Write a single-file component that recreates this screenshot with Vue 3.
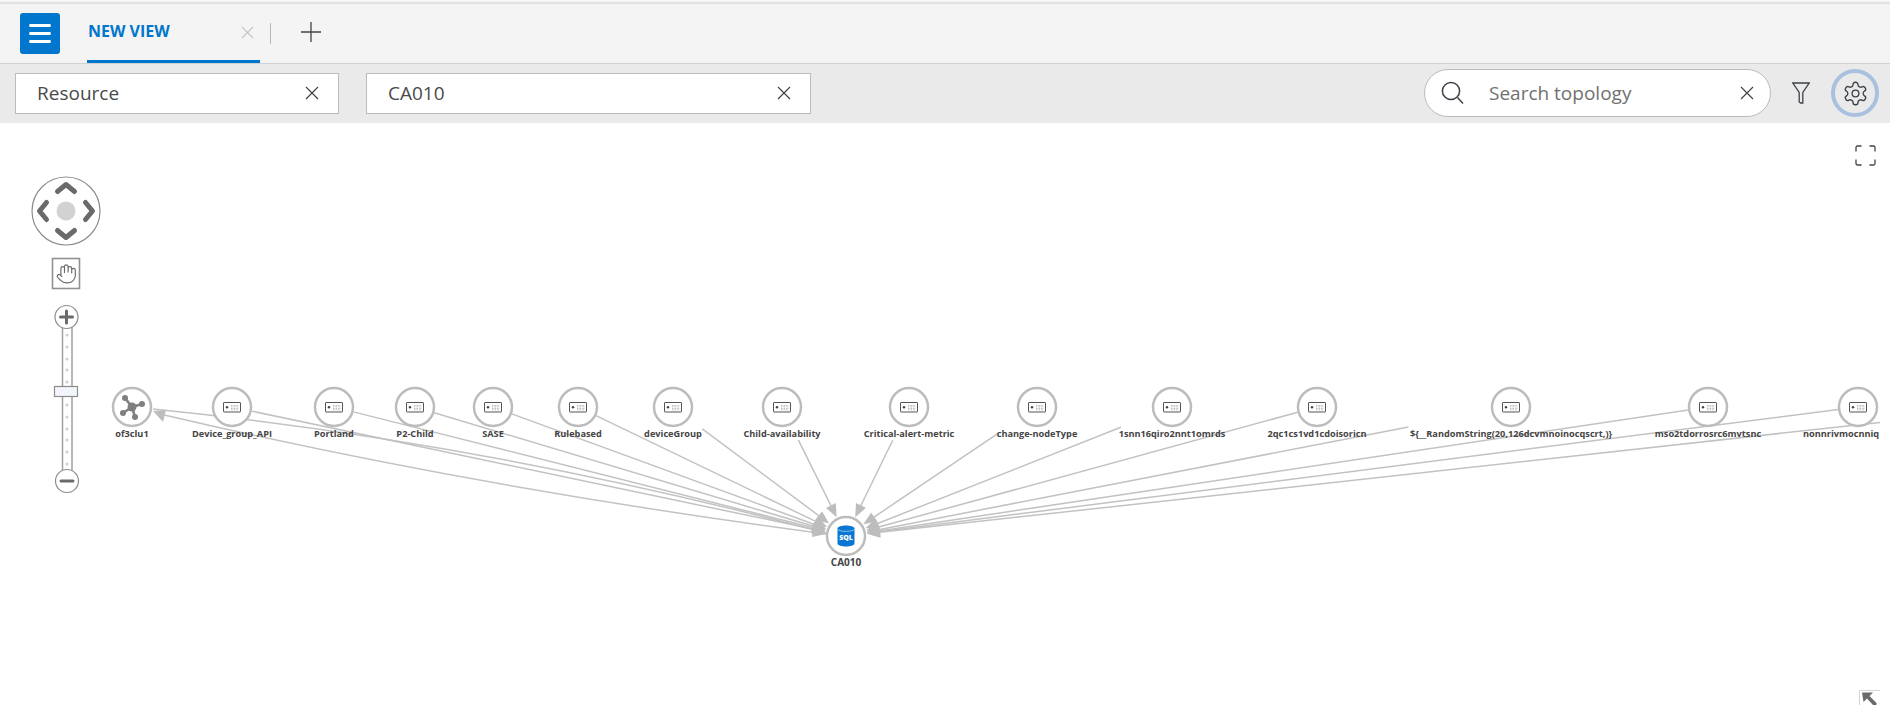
<script setup>
const target = { x: 846, y: 536, r: 20 }
const rawNodes = [
  { name: 'Device_group_API', x: 232 },
  { name: 'Portland', x: 334 },
  { name: 'P2-Child', x: 415 },
  { name: 'SASE', x: 493 },
  { name: 'Rulebased', x: 578 },
  { name: 'deviceGroup', x: 673 },
  { name: 'Child-availability', x: 782 },
  { name: 'Critical-alert-metric', x: 909 },
  { name: 'change-nodeType', x: 1037 },
  { name: '1snn16qiro2nnt1omrds', x: 1172 },
  { name: '2qc1cs1vd1cdoisoricn', x: 1317 },
  { name: '${__RandomString(20,126dcvmnoinocqscrt,)}', x: 1511 },
  { name: 'mso2tdorrosrc6mvtsnc', x: 1708 },
  { name: 'nonnrivmocnniq', x: 1858, labelX: -55, start: true },
]
const labelWidth = (s) => s.length * 4.9
const nodeY = 407

function edgeFrom(n) {
  const dx = target.x - n.x
  const dy = target.y - nodeY
  const len = Math.hypot(dx, dy)
  const ux = dx / len
  const uy = dy / len
  let t = 20
  const hw = labelWidth(n.name) / 2 + 2
  for (let s = 20; s < 140; s += 0.5) {
    const px = n.x + ux * s
    const py = nodeY + uy * s
    if (py > 426 && py < 440 && Math.abs(px - n.x) < hw) t = s + 0.5
  }
  const x1 = n.x + ux * t
  const y1 = nodeY + uy * t
  const x2 = target.x - ux * (target.r + 12)
  const y2 = target.y - uy * (target.r + 12)
  return { x1, y1, x2, y2, arrow: arrowAt(target.x - ux * (target.r + 1), target.y - uy * (target.r + 1), ux, uy) }
}
function arrowAt(tx, ty, ux, uy) {
  const bx = tx - ux * 13
  const by = ty - uy * 13
  const nx = -uy * 5.5
  const ny = ux * 5.5
  return `${tx},${ty} ${bx + nx},${by + ny} ${bx - nx},${by - ny}`
}
const nodes = rawNodes.map((n) => ({ ...n, edge: edgeFrom(n) }))
const offEdge = edgeFrom({ name: '', x: 2020 })
const hatch = [0, 1, 2, 3].flatMap((r) => [0, 1, 2, 3, 4].map((c) => ({ x: 8 + c * 1.6, y: 3 + r * 1.5 })))
const dots = [335, 347, 359, 370, 382, 405, 417, 429, 440, 452, 464]
</script>

<template>
  <div class="page">
    <div class="top-shadow"></div>
    <header class="tabbar">
      <button class="menu" aria-label="Menu"><span></span><span></span><span></span></button>
      <div class="tab">
        <span class="tab-title">NEW VIEW</span>
        <svg class="tab-x" width="13" height="13" viewBox="0 0 13 13"><path d="M1 1l11 11M12 1L1 12" /></svg>
      </div>
      <i class="divider"></i>
      <svg class="plus" width="22" height="22" viewBox="0 0 22 22"><path d="M11 1v20M1 11h20" /></svg>
    </header>
    <section class="filters">
      <div class="field first"><span>Resource</span>
        <svg class="x" width="14" height="14" viewBox="0 0 14 14"><path d="M1 1l12 12M13 1L1 13" /></svg>
      </div>
      <div class="field second"><span>CA010</span>
        <svg class="x" width="14" height="14" viewBox="0 0 14 14"><path d="M1 1l12 12M13 1L1 13" /></svg>
      </div>
      <div class="search">
        <svg class="search-ico" width="23" height="24" viewBox="0 0 23 24"><circle cx="10" cy="10" r="8.6" /><path d="M16.5 16.5l5.5 6" /></svg>
        <span class="placeholder">Search topology</span>
        <svg class="x" width="14" height="14" viewBox="0 0 14 14"><path d="M1 1l12 12M13 1L1 13" /></svg>
      </div>
      <svg class="funnel" width="18" height="22" viewBox="0 0 18 22"><path d="M.8 1h16.4l-6.400 9.500V21H8.600L7.200 20V10.500z" /></svg>
      <div class="gear-ring">
        <svg width="27" height="27" viewBox="0 0 24 24"><path d="M12.22 2h-.44a2 2 0 0 0-2 2v.18a2 2 0 0 1-1 1.73l-.43.25a2 2 0 0 1-2 0l-.15-.08a2 2 0 0 0-2.73.73l-.22.38a2 2 0 0 0 .73 2.73l.15.1a2 2 0 0 1 1 1.72v.51a2 2 0 0 1-1 1.74l-.15.09a2 2 0 0 0-.73 2.73l.22.38a2 2 0 0 0 2.73.73l.15-.08a2 2 0 0 1 2 0l.43.25a2 2 0 0 1 1 1.73V20a2 2 0 0 0 2 2h.44a2 2 0 0 0 2-2v-.18a2 2 0 0 1 1-1.73l.43-.25a2 2 0 0 1 2 0l.15.08a2 2 0 0 0 2.73-.73l.22-.39a2 2 0 0 0-.73-2.73l-.15-.08a2 2 0 0 1-1-1.74v-.5a2 2 0 0 1 1-1.74l.15-.09a2 2 0 0 0 .73-2.73l-.22-.38a2 2 0 0 0-2.73-.73l-.15.08a2 2 0 0 1-2 0l-.43-.25a2 2 0 0 1-1-1.73V4a2 2 0 0 0-2-2z" /><circle cx="12" cy="12" r="3" /></svg>
      </div>
    </section>
    <main class="canvas">
      <svg class="graph" width="1880" height="582" viewBox="0 123 1880 582">
        <g class="edges">
          <path d="M153 409 Q 490 443 826 533" />
          <path d="M160 414 Q 470 487 826 534" />
          <line v-for="n in nodes" :key="n.name" :x1="n.edge.x1" :y1="n.edge.y1" :x2="n.edge.x2" :y2="n.edge.y2" />
          <line :x1="offEdge.x1" :y1="offEdge.y1" :x2="offEdge.x2" :y2="offEdge.y2" />
        </g>
        <g class="arrows">
          <polygon points="153,411 166,410 163,422" />
          <polygon points="826,533 813,523 811,533" />
          <polygon points="826,534 813,527 812,537" />
          <polygon v-for="n in nodes" :key="n.name" :points="n.edge.arrow" />
          <polygon :points="offEdge.arrow" />
        </g>
        <g transform="translate(132 407)">
          <circle class="node" r="19" />
          <g class="cluster">
            <path d="M0 0L-7-9M0 0L10-3M0 0L3 10M0 0L-9 6" />
            <circle r="4.5" />
            <circle cx="-7" cy="-9" r="3" />
            <circle cx="10" cy="-3" r="3" />
            <circle cx="3" cy="10" r="3" />
            <circle cx="-9" cy="6" r="3" />
          </g>
          <text class="label" y="30">of3clu1</text>
        </g>
        <g v-for="n in nodes" :key="n.name" :transform="`translate(${n.x} ${nodeY})`">
          <circle class="node" r="19" />
          <g transform="translate(-9 -5)">
            <rect class="dev" x="0.5" y="0.5" width="17" height="9.5" rx="0.5" />
            <circle class="dev-dot" cx="4" cy="5.2" r="1.2" />
            <rect v-for="(h, i) in hatch" :key="i" class="dev-h" :x="h.x" :y="h.y" width="0.8" height="0.8" />
          </g>
          <text class="label" :class="{ 'label-start': n.start }" :x="n.labelX || 0" y="30">{{ n.name }}</text>
        </g>
        <g :transform="`translate(${target.x} ${target.y})`">
          <circle class="node" r="19" />
          <path class="db" d="M-8.5-7.5C-8.5-11.5 8.5-11.5 8.5-7.5V7.5C8.5 11.5-8.5 11.5-8.5 7.5z" />
          <path class="db-line" d="M-8.5-7.2C-8.5-3.8 8.5-3.8 8.5-7.2" />
          <text class="sql" y="3.6">SQL</text>
          <text class="label target-label" y="29.5">CA010</text>
        </g>
        <g transform="translate(66 211)">
          <circle class="nav-ring" r="34" />
          <circle class="nav-center" r="9.5" />
          <path class="chev" d="M-8.500-19.500L0-26.500L8.500-19.500M-8.500 19.500L0 26.500L8.500 19.500M-19.500-8.500L-26.500 0L-19.500 8.500M19.500-8.500L26.500 0L19.500 8.500" />
        </g>
        <g>
          <rect class="hand-box" x="52.5" y="258.5" width="27" height="30" />
          <g class="hand" transform="translate(55.5 263) scale(.9)">
            <path d="M18 11V6a2 2 0 0 0-2-2a2 2 0 0 0-2 2M14 10V4a2 2 0 0 0-2-2a2 2 0 0 0-2 2v2M10 10.500V6a2 2 0 0 0-2-2a2 2 0 0 0-2 2v8M18 8a2 2 0 1 1 4 0v6a8 8 0 0 1-8 8h-2c-2.800 0-4.500-.86-5.990-2.340l-3.600-3.600a2 2 0 0 1 2.830-2.820L7 15" />
          </g>
        </g>
        <g>
          <rect class="track" x="62.5" y="326" width="9.5" height="146" />
          <circle v-for="d in dots" :key="d" class="track-dot" cx="67" :cy="d" r="1.5" />
          <rect class="thumb" x="54.5" y="386.5" width="23" height="10" />
          <g transform="translate(66.5 317)">
            <circle class="zoom-btn" r="11.5" />
            <path class="zoom-sign" d="M-6 0H6M0-6V6" />
          </g>
          <g transform="translate(67 481)">
            <circle class="zoom-btn" r="11.5" />
            <path class="zoom-sign" d="M-6 0H6" />
          </g>
        </g>
      </svg>
      <svg class="fullscreen" width="21" height="21" viewBox="0 0 21 21"><path d="M1 6.500V2.500A1.500 1.500 0 0 1 2.500 1H6.500M14.500 1H18.500A1.500 1.500 0 0 1 20 2.500V6.500M20 14.500V18.500A1.500 1.500 0 0 1 18.500 20H14.500M6.500 20H2.500A1.500 1.500 0 0 1 1 18.500V14.500" /></svg>
      <svg class="corner" width="21" height="15" viewBox="0 0 21 15"><path class="corner-box" d="M.5 15V.5H21" /><path class="corner-arrow" d="M3 2.500h11l-3.500 3.500 7 7v2h-3.500l-6-6.500-3.500 3.500z" /></svg>
    </main>
  </div>
</template>

<style>
html, body { margin: 0; background: #fff; }
</style>

<style scoped>
.page {
  width: 1890px;
  height: 705px;
  overflow: hidden;
  display: flex;
  flex-direction: column;
  font-family: "Open Sans", "Noto Sans", sans-serif;
  color: #4a4a4a;
  background: #fff;
}
.top-shadow { height: 4px; background: linear-gradient(#fff, #d8d8d8); }
.tabbar {
  height: 59px;
  display: flex;
  align-items: flex-start;
  padding-left: 20px;
  background: #f4f4f4;
  border-bottom: 1px solid #d2d2d2;
}
.menu {
  width: 40px;
  height: 41px;
  margin-top: 9px;
  padding: 0 9px;
  border: 0;
  border-radius: 3px;
  background: #0077cc;
  display: flex;
  flex-direction: column;
  justify-content: center;
  gap: 5px;
}
.menu span { display: block; height: 3px; border-radius: 2px; background: #fff; }
.tab {
  width: 172px;
  height: 56px;
  margin-left: 27px;
  padding-left: 1px;
  display: flex;
  align-items: center;
  border-bottom: 3px solid #0077cc;
  justify-content: space-between;
}
.tab-title { font-size: 16px; font-weight: 700; color: #0077cc; margin-top: -2px; }
.tab-x { margin: 0 5px 0 0; position: relative; left: -1px; }
.tab-x path { stroke: #c8c8c8; stroke-width: 1.3; fill: none; }
.divider { width: 1px; height: 21px; margin: 19px 0 0 10px; background: #b8b8b8; }
.plus { margin: 17px 0 0 29px; }
.plus path { stroke: #444; stroke-width: 1.3; fill: none; }
.filters {
  height: 59px;
  box-sizing: border-box;
  display: flex;
  align-items: center;
  padding: 0 0 1px 15px;
  background: #eaeaea;
}
.field {
  height: 41px;
  box-sizing: border-box;
  display: flex;
  align-items: center;
  justify-content: space-between;
  padding: 0 19px 0 21px;
  background: #fff;
  border: 1px solid #bcbcbc;
  font-size: 19px;
}
.first { width: 324px; }
.second { width: 445px; margin-left: 27px; }
.x path { stroke: #444; stroke-width: 1.2; fill: none; }
.search {
  width: 347px;
  height: 48px;
  box-sizing: border-box;
  display: flex;
  align-items: center;
  padding: 0 16px;
  background: #fff;
  border: 1px solid #bcbcbc;
  border-radius: 24px;
  margin-left: 613px;
}
.search-ico { flex: none; }
.search-ico circle, .search-ico path { fill: none; stroke: #3c4248; stroke-width: 1.5; }
.placeholder { font-size: 19px; color: #707070; margin-left: 25px; flex: 1; }
.funnel { margin-left: 21px; }
.funnel path { fill: none; stroke: #3c4248; stroke-width: 1.3; }
.gear-ring {
  width: 48px;
  height: 48px;
  box-sizing: border-box;
  margin-left: 21px;
  border: 4px solid #a9c1de;
  border-radius: 50%;
  display: flex;
  align-items: center;
  justify-content: center;
}
.gear-ring path, .gear-ring circle { fill: none; stroke: #3c4248; stroke-width: 1.2; }
.canvas { position: relative; flex: 1; min-height: 0; }
.graph { position: absolute; left: 0; top: 0; }
.edges path, .edges line { fill: none; stroke: #c2c2c2; stroke-width: 1.5; }
.arrows polygon { fill: #bdbdbd; }
.node { fill: #fff; stroke: #bcbcbc; stroke-width: 2.5; }
.cluster path { stroke: #7f7f7f; stroke-width: 2.6; }
.cluster circle { fill: #7f7f7f; }
.label {
  font-family: "Open Sans", sans-serif;
  font-size: 9.2px;
  font-weight: 700;
  fill: #444;
  text-anchor: middle;
}
.label-start { text-anchor: start; }
.target-label { font-size: 10px; }
.dev { fill: #fff; stroke: #555; stroke-width: 1; }
.dev-dot { fill: #444; }
.dev-h { fill: #9a9a9a; }
.db { fill: #0a78d2; }
.db-line { fill: none; stroke: #7cc0f0; stroke-width: 1; }
.sql { font-family: "Open Sans", sans-serif; font-size: 7px; font-weight: 800; fill: #fff; text-anchor: middle; }
.nav-ring { fill: #fff; stroke: #8c8c8c; stroke-width: 1.2; }
.nav-center { fill: #d2d2d2; }
.chev { fill: none; stroke: #6a6a6a; stroke-width: 5; stroke-linejoin: round; stroke-linecap: round; }
.hand-box { fill: #fff; stroke: #919191; stroke-width: 1.6; }
.hand path { fill: none; stroke: #6a6a6a; stroke-width: 1.3; stroke-linecap: round; stroke-linejoin: round; }
.track { fill: #fff; stroke: #a0a0a0; stroke-width: 1.5; }
.track-dot { fill: #cfcfcf; }
.thumb { fill: #f3f5fc; stroke: #8c8c8c; stroke-width: 1.2; }
.zoom-btn { fill: #fff; stroke: #8c8c8c; stroke-width: 1.2; }
.zoom-sign { fill: none; stroke: #6a6a6a; stroke-width: 3; stroke-linecap: round; }
.fullscreen { position: absolute; left: 1855px; top: 22px; }
.fullscreen path { fill: none; stroke: #444; stroke-width: 1.3; }
.corner { position: absolute; right: 10px; bottom: 0; }
.corner-box { fill: none; stroke: #d4d4d4; stroke-width: 1; }
.corner-arrow { fill: #6a6a6a; }
</style>
